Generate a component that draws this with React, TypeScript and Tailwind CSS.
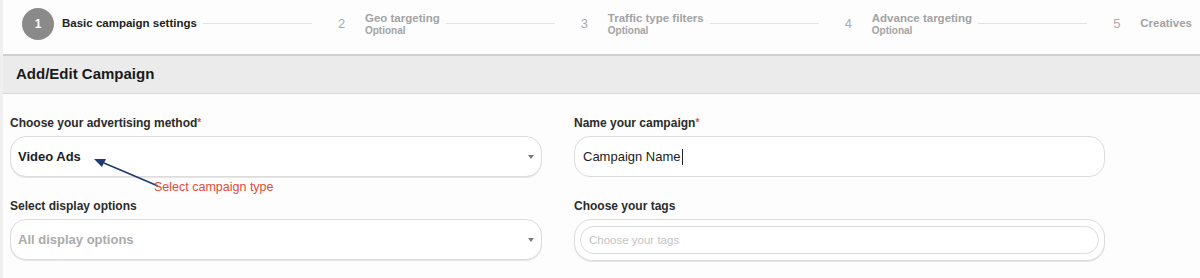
const font = "font-['Liberation_Sans',Arial,sans-serif]";

const steps = [
  { n: "2", title: "Geo targeting", optional: true },
  { n: "3", title: "Traffic type filters", optional: true },
  { n: "4", title: "Advance targeting", optional: true },
  { n: "5", title: "Creatives", optional: false },
];

function Line() {
  return <div className="ml-[6px] mr-[26px] h-px flex-1 bg-[#e3e3e3]" />;
}

function Caret() {
  return (
    <span className="h-0 w-0 border-l-[3.5px] border-r-[3.5px] border-t-[4px] border-l-transparent border-r-transparent border-t-[#7a7a7a]" />
  );
}

function Label({ text, required }: { text: string; required?: boolean }) {
  return (
    <div className="mb-[6px] h-[14px] text-[12px] leading-[14px] font-bold text-[#2b2b2b]">
      {text}
      {required && <span className="align-top text-[10px] text-[#e5493a]">*</span>}
    </div>
  );
}

export default function App() {
  return (
    <div className={`h-[278px] w-[1200px] overflow-hidden border-l-[3px] border-[#f0f0f0] bg-[#fdfdfd] ${font}`}>
      {/* wizard steps */}
      <div className="flex h-[54px] items-start pt-[7px] pl-[19px] pr-[8px]">
        <div className="flex h-[33px] flex-1 items-center">
          <span className="flex h-[32px] w-[32px] items-center justify-center rounded-full bg-[#8a8a8a] text-[12px] font-bold text-white">
            1
          </span>
          <span className="ml-[8px] text-[11.5px] font-bold text-[#222]">Basic campaign settings</span>
          {steps.map((s) => (
            <div key={s.n} className="contents">
              <Line />
              <span className="w-[7px] text-[13px] text-[#ababab]">{s.n}</span>
              <div className="ml-[20px] flex flex-col">
                <span className="text-[11.5px] leading-[13px] font-bold text-[#a3a3a3]">{s.title}</span>
                {s.optional && (
                  <span className="text-[10px] leading-[11px] font-bold text-[#a3a3a3]">Optional</span>
                )}
              </div>
            </div>
          ))}
        </div>
      </div>

      {/* section header */}
      <div className="flex h-[40px] items-center border-t-2 border-b border-t-[#cfcfcf] border-b-[#d8d8d8] bg-[#ebebeb] pl-[13px]">
        <h1 className="text-[15px] font-bold text-[#1a1a1a]">Add/Edit Campaign</h1>
      </div>

      {/* form */}
      <div className="grid grid-cols-[532px_531px] gap-x-[32px] pt-[22px] pl-[7px]">
        <div className="relative">
          <Label text="Choose your advertising method" required />
          <div className="flex h-[41px] items-center justify-between rounded-[16px] border border-[#dcdcdc] bg-white pr-[7px] pl-[7px] shadow-[0_1px_0_#e6e6e6]">
            <span className="text-[13px] font-bold text-[#1e1e1e]">Video Ads</span>
            <Caret />
          </div>
          <svg className="absolute top-[37px] left-[70px]" width="80" height="40" viewBox="0 0 80 40">
            <line x1="78" y1="33" x2="24" y2="10" stroke="#1f3a72" strokeWidth="1.6" />
            <polygon points="14,6 26,6 22,14" fill="#1f3a72" />
          </svg>
          <span className="absolute top-[62px] left-[144px] text-[12.5px] text-[#e5493a]">Select campaign type</span>

          <div className="mt-[22px]">
            <Label text="Select display options" />
            <div className="flex h-[41px] items-center justify-between rounded-[16px] border border-[#dcdcdc] bg-white pr-[7px] pl-[7px] shadow-[0_1px_0_#e6e6e6]">
              <span className="text-[13px] font-bold text-[#ababab]">All display options</span>
              <Caret />
            </div>
          </div>
        </div>

        <div>
          <Label text="Name your campaign" required />
          <div className="flex h-[41px] items-center rounded-[16px] border border-[#dcdcdc] bg-white pl-[8px]">
            <span className="text-[13px] text-[#222]">Campaign Name</span>
            <span className="ml-px h-[16px] w-px bg-[#222]" />
          </div>

          <div className="mt-[22px]">
            <Label text="Choose your tags" />
            <div className="h-[42px] rounded-[18px] border border-[#dcdcdc] bg-white px-[5px] pt-[6px] shadow-[0_1px_0_#e6e6e6]">
              <div className="flex h-[28px] items-center rounded-full border border-[#dcdcdc] pl-[8px] pt-px">
                <span className="text-[11.5px] text-[#c4c4c4]">Choose your tags</span>
              </div>
            </div>
          </div>
        </div>
      </div>
    </div>
  );
}
